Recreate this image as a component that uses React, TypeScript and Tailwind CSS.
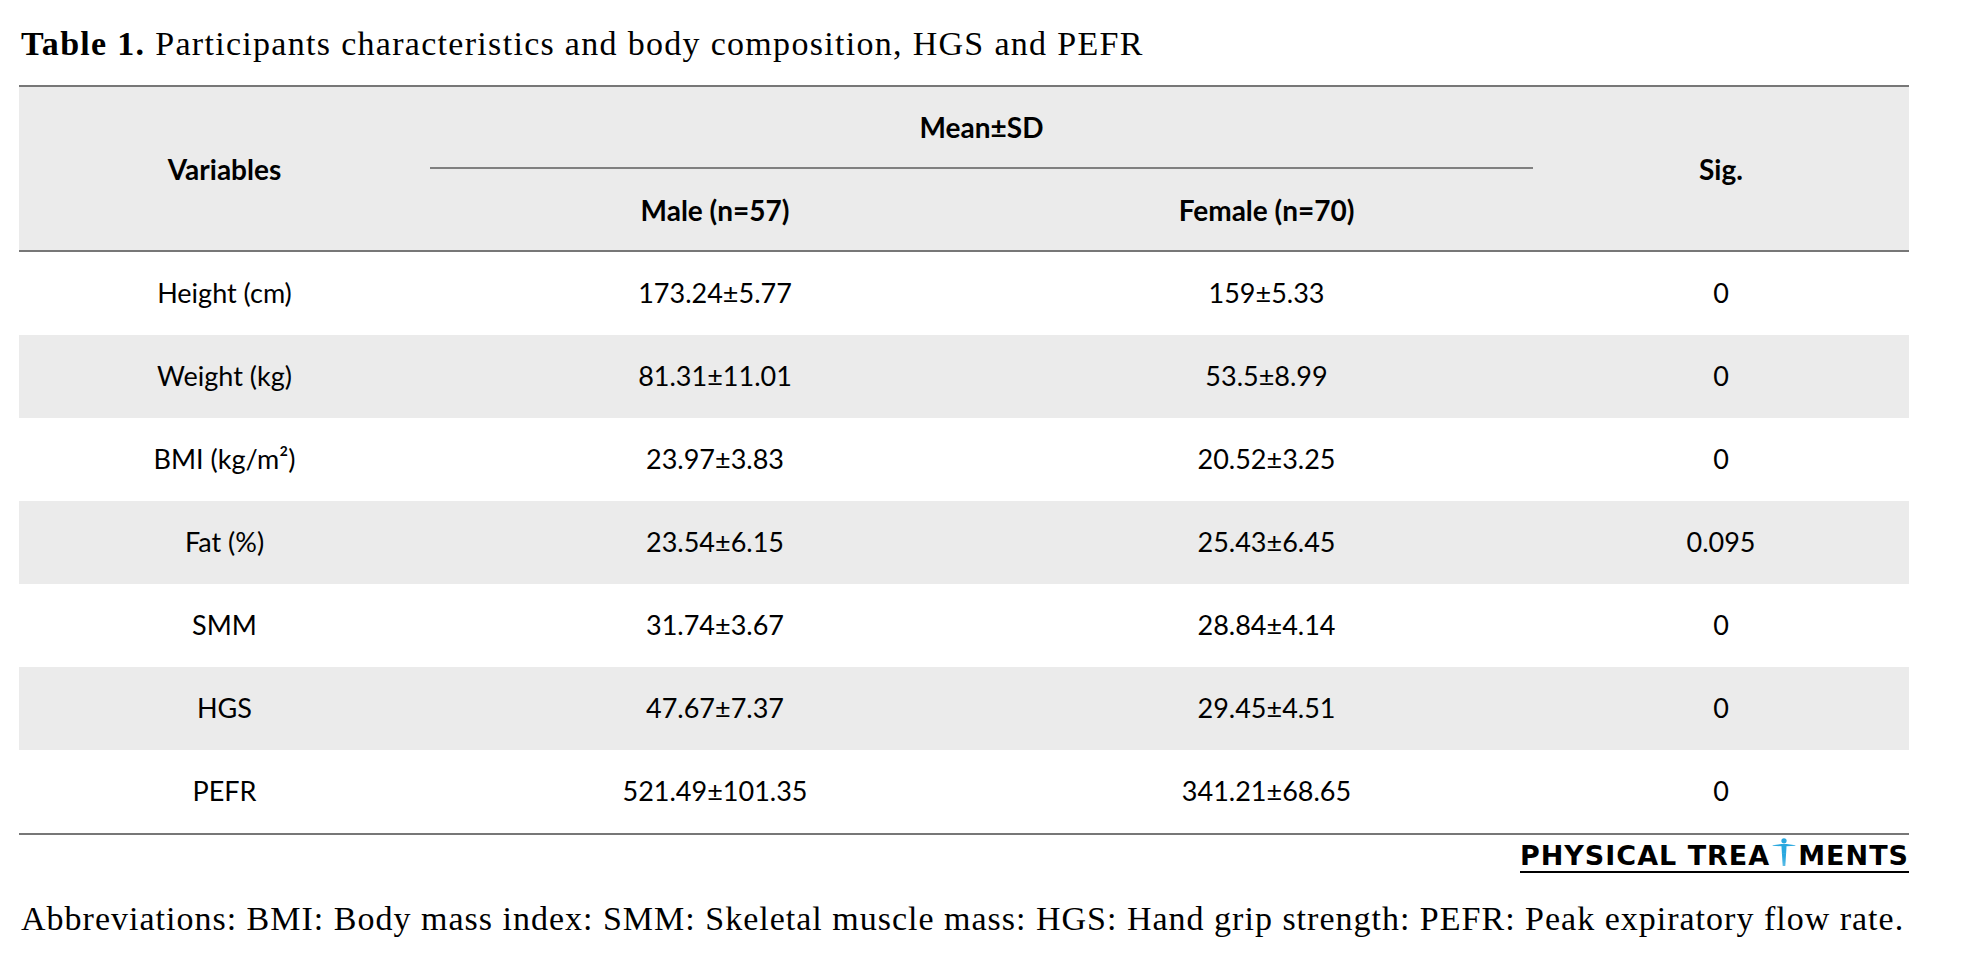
import React from 'react';

const rows = [
  { name: 'Height (cm)', male: '173.24±5.77', female: '159±5.33', sig: '0' },
  { name: 'Weight (kg)', male: '81.31±11.01', female: '53.5±8.99', sig: '0' },
  { name: 'BMI (kg/m²)', male: '23.97±3.83', female: '20.52±3.25', sig: '0' },
  { name: 'Fat (%)', male: '23.54±6.15', female: '25.43±6.45', sig: '0.095' },
  { name: 'SMM', male: '31.74±3.67', female: '28.84±4.14', sig: '0' },
  { name: 'HGS', male: '47.67±7.37', female: '29.45±4.51', sig: '0' },
  { name: 'PEFR', male: '521.49±101.35', female: '341.21±68.65', sig: '0' },
];

const Figure = () => (
  <svg width="24" height="28" viewBox="0 0 26 32" className="mx-[2px] mb-[1px]">
    <circle cx="13" cy="3.2" r="3" fill="#29a8df" />
    <path d="M0 8.2 L10 6.8 L16 6.8 L26 8.2 L26 8.8 L16 9.4 L10 9.4 L0 8.8 Z" fill="#29a8df" />
    <path d="M10 6.8 H16 L15.4 18 H10.6 Z" fill="#29a8df" />
    <path d="M10.6 17.5 L11.6 32 L12.7 32 L13 21 L13.3 32 L14.4 32 L15.4 17.5 Z" fill="#29a8df" />
  </svg>
);

const App = () => {
  return (
    <div className="w-[1969px] h-[978px] bg-white text-black">
      {/* caption */}
      <div className="pl-[21px] pt-[20px] h-[68px] leading-[48px] text-[34px] tracking-[1.3px] font-['Liberation_Serif',serif] whitespace-nowrap">
        <span className="font-bold">Table 1.</span> Participants characteristics and body composition, HGS and PEFR
      </div>

      <div className="ml-[19px] mt-[17px] w-[1890px] font-['Lato',sans-serif] text-[27px]">
        <div className="grid grid-cols-[411px_570px_533px_376px] border-t-2 border-b-2 border-[#777] bg-[#ebebeb] font-bold text-[28px]">
          <div className="row-span-2 flex items-center justify-center">Variables</div>
          <div className="col-span-2 h-[82px] flex items-center justify-center border-b-2 border-[#808080]">Mean±SD</div>
          <div className="row-span-2 flex items-center justify-center">Sig.</div>
          <div className="h-[81px] flex items-center justify-center">Male (n=57)</div>
          <div className="h-[81px] flex items-center justify-center">Female (n=70)</div>
        </div>

        <div className="border-b-2 border-[#777]">
          {rows.map((r, i) => (
            <div
              key={r.name}
              className={`grid grid-cols-[411px_570px_533px_376px] h-[83px] items-center text-center ${i % 2 === 1 ? 'bg-[#ebebeb]' : 'bg-white'}`}
            >
              <div>{r.name}</div>
              <div>{r.male}</div>
              <div>{r.female}</div>
              <div>{r.sig}</div>
            </div>
          ))}
        </div>

        <div className="flex justify-end pt-[3px]">
          <div className="flex items-end border-b-2 border-black pb-[4px] font-['DejaVu_Sans',sans-serif] font-bold text-[27px] leading-[22px] tracking-[1px]">
            <span>PHYSICAL TREA</span>
            <Figure />
            <span>MENTS</span>
          </div>
        </div>
      </div>

      <div className="pl-[21px] pt-[22px] text-[34px] leading-[48px] tracking-[1px] font-['Liberation_Serif',serif] whitespace-nowrap">
        Abbreviations: BMI: Body mass index: SMM: Skeletal muscle mass: HGS: Hand grip strength: PEFR: Peak expiratory flow rate.
      </div>
    </div>
  );
};

export default App;
